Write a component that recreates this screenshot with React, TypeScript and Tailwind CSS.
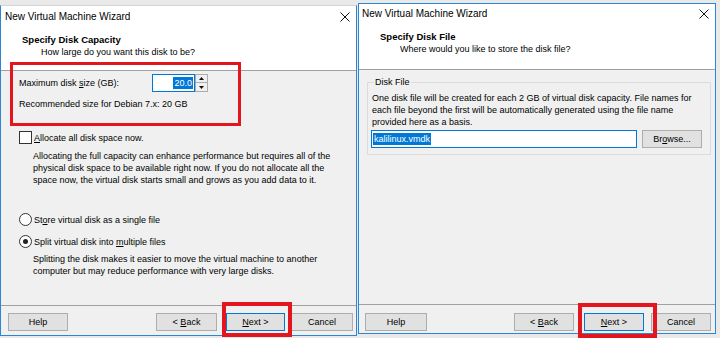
import type { ReactNode } from "react";

const FONT = "font-['Liberation_Sans',Arial,sans-serif]";

function CloseIcon() {
  return (
    <svg width="10" height="10" viewBox="0 0 10 10" className="block">
      <path d="M0.5 0.5 L9.5 9.5 M9.5 0.5 L0.5 9.5" stroke="#111" strokeWidth="1" fill="none" />
    </svg>
  );
}

function Tri({ up }: { up: boolean }) {
  return (
    <svg width="5" height="3" viewBox="0 0 5 3" className="block">
      <path d={up ? "M0 3 L2.5 0 L5 3 Z" : "M0 0 L5 0 L2.5 3 Z"} fill="#111" />
    </svg>
  );
}

function WinButton({
  children,
  primary = false,
  className = "",
}: {
  children: ReactNode;
  primary?: boolean;
  className?: string;
}) {
  return (
    <button
      type="button"
      className={`flex h-[18px] items-center justify-center whitespace-pre border bg-[#e1e1e1] text-[9px] leading-[12px] ${
        primary ? "border-[#0078d7]" : "border-[#adadad]"
      } ${className}`}
    >
      {children}
    </button>
  );
}

function Radio({ checked = false }: { checked?: boolean }) {
  return (
    <span className="flex h-[13px] w-[13px] items-center justify-center rounded-full border border-[#333] bg-white">
      {checked && <span className="h-[5px] w-[5px] rounded-full bg-[#222]" />}
    </span>
  );
}

function LeftWindow() {
  return (
    <div className="mt-[5px] flex h-[331px] w-[357px] flex-col border border-[#2b86d6] border-t-[#d4d4d4] bg-[#f0f0f0]">
      <div className="border-b border-[#a0a0a0] bg-white pb-[12px]">
        <div className="flex h-[21px] items-center justify-between pl-[4px] pr-[6px]">
          <span className="text-[10px] leading-[12px]">New Virtual Machine Wizard</span>
          <CloseIcon />
        </div>
        <div className="pl-[21px] pt-[7px] text-[9.5px] font-bold leading-[12px]">Specify Disk Capacity</div>
        <div className="pl-[40px] text-[9px] leading-[12px]">How large do you want this disk to be?</div>
      </div>

      <div className="flex-1 pl-[18px] pt-[3px] text-[9px] leading-[12px]">
        <div className="flex h-[18px] items-center">
          <span className="w-[133px]">
            Maximum disk <u>s</u>ize (GB):
          </span>
          <div className="flex h-[18px] w-[43px] items-center justify-end border border-[#0078d7] bg-white pr-[1px]">
            <span className="bg-[#0078d7] px-[1px] text-white">20.0</span>
          </div>
          <div className="flex h-[18px] w-[13px] flex-col">
            <span className="flex h-[9px] items-center justify-center border border-[#acacac] bg-[#f0f0f0]">
              <Tri up />
            </span>
            <span className="flex h-[9px] items-center justify-center border border-t-0 border-[#acacac] bg-[#f0f0f0]">
              <Tri up={false} />
            </span>
          </div>
        </div>
        <div className="mt-[6px]">Recommended size for Debian 7.x: 20 GB</div>

        <div className="mt-[21px] flex h-[13px] items-center gap-[2px]">
          <span className="h-[13px] w-[13px] border border-[#333] bg-white" />
          <span>
            <u>A</u>llocate all disk space now.
          </span>
        </div>
        <p className="mt-[6px] pl-[14px]">
          Allocating the full capacity can enhance performance but requires all of the
          <br />
          physical disk space to be available right now. If you do not allocate all the
          <br />
          space now, the virtual disk starts small and grows as you add data to it.
        </p>

        <div className="mt-[27px] flex h-[13px] items-center gap-[2px]">
          <Radio />
          <span>
            St<u>o</u>re virtual disk as a single file
          </span>
        </div>
        <div className="mt-[9px] flex h-[13px] items-center gap-[2px]">
          <Radio checked />
          <span>
            Split virtual disk into <u>m</u>ultiple files
          </span>
        </div>
        <p className="mt-[5px] pl-[14px]">
          Splitting the disk makes it easier to move the virtual machine to another
          <br />
          computer but may reduce performance with very large disks.
        </p>
      </div>

      <div className="flex h-[30px] items-start border-t border-[#a0a0a0] pl-[7px] pr-[3px] pt-[7px]">
        <WinButton className="w-[60px]">Help</WinButton>
        <WinButton className="ml-auto w-[61px]">
          <span>&lt;&nbsp;</span>
          <u>B</u>
          <span>ack</span>
        </WinButton>
        <WinButton primary className="ml-[9px] w-[59px]">
          <u>N</u>
          <span>ext&nbsp;&gt;</span>
        </WinButton>
        <WinButton className="ml-[6px] w-[62px]">Cancel</WinButton>
      </div>
    </div>
  );
}

function RightWindow() {
  return (
    <div className="ml-[1px] mt-[3px] flex h-[331px] w-[358px] flex-col border border-[#2b86d6] bg-[#f0f0f0]">
      <div className="border-b border-[#a0a0a0] bg-white pb-[14px]">
        <div className="flex h-[20px] items-center justify-between pl-[3px] pr-[6px]">
          <span className="text-[10px] leading-[12px]">New Virtual Machine Wizard</span>
          <CloseIcon />
        </div>
        <div className="pl-[21px] pt-[7px] text-[9.5px] font-bold leading-[12px]">Specify Disk File</div>
        <div className="pl-[41px] text-[9px] leading-[12px]">Where would you like to store the disk file?</div>
      </div>

      <div className="flex-1 text-[9px] leading-[12px]">
        <fieldset className="ml-[8px] mt-[6px] w-[344px] border border-[#dcdcdc] pb-[6px] pl-[3px]">
          <legend className="ml-[3px] px-[1px]">Disk File</legend>
          <p className="pl-[1px] pt-[4px]">
            One disk file will be created for each 2 GB of virtual disk capacity. File names for
            <br />
            each file beyond the first will be automatically generated using the file name
            <br />
            provided here as a basis.
          </p>
          <div className="mt-[2px] flex items-center">
            <div className="flex h-[18px] w-[266px] items-center border border-[#0078d7] bg-white pl-[1px]">
              <span className="bg-[#0078d7] px-[1px] text-white">kalilinux.vmdk</span>
            </div>
            <WinButton className="ml-[5px] w-[60px]">
              <span>Br</span>
              <u>o</u>
              <span>wse...</span>
            </WinButton>
          </div>
        </fieldset>
      </div>

      <div className="flex h-[29px] items-start border-t border-[#a0a0a0] pl-[6px] pr-[4px] pt-[8px]">
        <WinButton className="w-[62px]">Help</WinButton>
        <WinButton className="ml-auto w-[60px]">
          <span>&lt;&nbsp;</span>
          <u>B</u>
          <span>ack</span>
        </WinButton>
        <WinButton primary className="ml-[10px] w-[60px]">
          <u>N</u>
          <span>ext&nbsp;&gt;</span>
        </WinButton>
        <WinButton className="ml-[7px] w-[60px]">Cancel</WinButton>
      </div>
    </div>
  );
}

export default function App() {
  return (
    <div className={`relative h-[338px] w-[720px] overflow-hidden bg-[#e9e9e9] text-black ${FONT}`}>
      <div className="flex items-start">
        <LeftWindow />
        <RightWindow />
      </div>

      {/* red annotation boxes */}
      <div className="absolute left-[10px] top-[62px] h-[64px] w-[231px] border-[3px] border-[#e3161f]" />
      <div className="absolute left-[222px] top-[302px] h-[35px] w-[70px] border-[4px] border-[#e3161f]" />
      <div className="absolute left-[578px] top-[303px] h-[35px] w-[79px] border-[4px] border-[#e3161f]" />
    </div>
  );
}
